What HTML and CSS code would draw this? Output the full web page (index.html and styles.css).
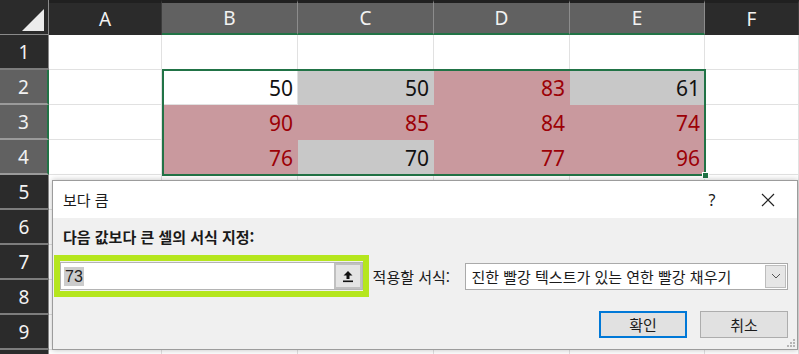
FILE: index.html
```html
<!DOCTYPE html>
<html lang="ko">
  <head>
    <meta charset="UTF-8" />
    <title>보다 큼</title>
    <link rel="stylesheet" href="styles.css">
  </head>
  <body>
    <div class="sheet">
      <div class="grid">
        <div class="corner">
          <svg width="49" height="35" viewBox="0 0 49 35"><polygon points="22,31 44,31 44,9" fill="#ececec"/></svg>
        </div>
        <div class="colhead">A</div>
        <div class="colhead sel">B</div>
        <div class="colhead sel">C</div>
        <div class="colhead sel">D</div>
        <div class="colhead sel">E</div>
        <div class="colhead">F</div>

        <div class="rowhead">1</div>
        <div class="cell"></div><div class="cell"></div><div class="cell"></div><div class="cell"></div><div class="cell"></div><div class="cell"></div>

        <div class="rowhead sel">2</div>
        <div class="cell"></div>
        <div class="cell">50</div>
        <div class="cell gray">50</div>
        <div class="cell red">83</div>
        <div class="cell gray">61</div>
        <div class="cell"></div>

        <div class="rowhead sel">3</div>
        <div class="cell"></div>
        <div class="cell red">90</div>
        <div class="cell red">85</div>
        <div class="cell red">84</div>
        <div class="cell red">74</div>
        <div class="cell"></div>

        <div class="rowhead sel">4</div>
        <div class="cell"></div>
        <div class="cell red">76</div>
        <div class="cell gray">70</div>
        <div class="cell red">77</div>
        <div class="cell red">96</div>
        <div class="cell"></div>

        <div class="rowhead">5</div>
        <div class="cell"></div><div class="cell"></div><div class="cell"></div><div class="cell"></div><div class="cell"></div><div class="cell"></div>
        <div class="rowhead">6</div>
        <div class="cell"></div><div class="cell"></div><div class="cell"></div><div class="cell"></div><div class="cell"></div><div class="cell"></div>
        <div class="rowhead">7</div>
        <div class="cell"></div><div class="cell"></div><div class="cell"></div><div class="cell"></div><div class="cell"></div><div class="cell"></div>
        <div class="rowhead">8</div>
        <div class="cell"></div><div class="cell"></div><div class="cell"></div><div class="cell"></div><div class="cell"></div><div class="cell"></div>
        <div class="rowhead">9</div>
        <div class="cell"></div><div class="cell"></div><div class="cell"></div><div class="cell"></div><div class="cell"></div><div class="cell"></div>
        <div class="rowhead"></div>
        <div class="cell"></div><div class="cell"></div><div class="cell"></div><div class="cell"></div><div class="cell"></div><div class="cell"></div>
      </div>

      <div class="selection"><span class="handle"></span></div>

      <div class="dialog">
        <div class="title">
          <span class="title-text">보다 큼</span>
          <span class="help">?</span>
          <span class="close">
            <svg width="14" height="14" viewBox="0 0 14 14"><path d="M1 1 L13 13 M13 1 L1 13" stroke="#222" stroke-width="1.2" fill="none"/></svg>
          </span>
        </div>
        <div class="body">
          <div class="label">다음 값보다 큰 셀의 서식 지정:</div>
          <div class="field-row">
            <div class="highlight">
              <div class="input">
                <span class="value">73</span>
                <span class="ref-btn">
                  <svg width="12" height="13" viewBox="0 0 12 13"><path d="M6 1 L1.5 5.5 H4.5 V9 H7.5 V5.5 H10.5 Z" fill="#111"/><rect x="1" y="10.5" width="10" height="1.6" fill="#111"/></svg>
                </span>
              </div>
            </div>
            <span class="apply-label">적용할 서식:</span>
            <div class="select">
              <span class="select-text">진한 빨강 텍스트가 있는 연한 빨강 채우기</span>
              <span class="select-btn">
                <svg width="10" height="6" viewBox="0 0 10 6"><path d="M1 1 L5 5 L9 1" stroke="#555" stroke-width="1" fill="none"/></svg>
              </span>
            </div>
          </div>
          <div class="buttons">
            <button class="btn primary">확인</button>
            <button class="btn">취소</button>
          </div>
        </div>
        <svg class="grip" width="10" height="10" viewBox="0 0 10 10">
          <rect x="7" y="1" width="2" height="2" fill="#b5b5b5"/>
          <rect x="4" y="4" width="2" height="2" fill="#b5b5b5"/>
          <rect x="7" y="4" width="2" height="2" fill="#b5b5b5"/>
          <rect x="1" y="7" width="2" height="2" fill="#b5b5b5"/>
          <rect x="4" y="7" width="2" height="2" fill="#b5b5b5"/>
          <rect x="7" y="7" width="2" height="2" fill="#b5b5b5"/>
        </svg>
      </div>
    </div>
  </body>
</html>
```

FILE: styles.css
```css
*{
  margin: 0;
  padding: 0;
  box-sizing: border-box;
}

body{
  width: 799px;
  height: 354px;
  overflow: hidden;
  background: #ffffff;
  font-family: "Noto Sans", "Noto Sans CJK KR", sans-serif;
}

.sheet{
  position: relative;
  width: 799px;
  height: 354px;
  overflow: hidden;
}

.grid{
  display: grid;
  grid-template-columns: 49px 113px 136px 136px 136px 135px 94px;
  grid-auto-rows: 35px;
}

.corner{
  background: #2b2b2b;
  border-right: 1px solid #8a8a8a;
  border-bottom: 1px solid #8a8a8a;
}

.corner svg{
  display: block;
}

.colhead{
  background: #2b2b2b;
  color: #f2f2f2;
  font-size: 19px;
  display: flex;
  align-items: center;
  justify-content: center;
  border-right: 1px solid #3c3c3c;
  border-top: 3px solid #202020;
}

.colhead.sel{
  background: #616161;
  border-right: 1px solid #8c8c8c;
  border-bottom: 2px solid #217346;
}

.rowhead{
  background: #2b2b2b;
  color: #f2f2f2;
  font-size: 19px;
  display: flex;
  align-items: center;
  justify-content: center;
  border-bottom: 2px solid #7d7d7d;
  border-right: 1px solid #8a8a8a;
}

.rowhead.sel{
  background: #616161;
  border-bottom: 2px solid #9a9a9a;
  border-right: 2px solid #217346;
}

.cell{
  border-right: 1px solid #e1e1e1;
  border-bottom: 1px solid #e1e1e1;
  font-size: 21px;
  color: #111111;
  display: flex;
  align-items: center;
  justify-content: flex-end;
  padding: 2px 4px 0 0;
}

.cell.red{
  background: #c9999e;
  border-color: #c9999e;
  color: #9c0006;
}

.cell.gray{
  background: #c8c8c8;
  border-color: #c8c8c8;
}

.selection{
  position: absolute;
  left: 162px;
  top: 69px;
  width: 544px;
  height: 107px;
  border: 2px solid #217346;
}

.handle{
  position: absolute;
  right: -5px;
  bottom: -5px;
  width: 7px;
  height: 7px;
  background: #217346;
  border: 1px solid #ffffff;
}

/* dialog */
.dialog{
  position: absolute;
  left: 52px;
  top: 180px;
  width: 746px;
  height: 170px;
  border: 1px solid #9c9c9c;
  background: #f0f0f0;
  box-shadow: 0 0 6px rgba(0, 0, 0, 0.25);
  font-family: "Noto Sans CJK KR", sans-serif;
  font-size: 15px;
  color: #1a1a1a;
}

.title{
  height: 37px;
  background: #ffffff;
  display: flex;
  align-items: center;
  padding-left: 10px;
}

.title-text{
  flex: 1;
}

.help{
  width: 20px;
  text-align: center;
  font-family: "Noto Sans", sans-serif;
  font-size: 16px;
}

.close{
  width: 56px;
  display: flex;
  justify-content: center;
  margin-left: 18px;
  margin-right: 1px;
}

.body{
  padding: 9px 9px 0 10px;
}

.label{
  font-weight: bold;
  line-height: 20px;
}

.field-row{
  display: flex;
  align-items: center;
  margin-top: 8px;
  margin-left: -9px;
}

.highlight{
  width: 315px;
  height: 42px;
  border: 6px solid #b5e61d;
  padding: 1px 0 1px 0;
}

.input{
  height: 28px;
  background: #ffffff;
  border: 1px solid #b4b4b4;
  display: flex;
  align-items: center;
  justify-content: space-between;
  padding-left: 3px;
}

.value{
  font-family: "Liberation Sans", sans-serif;
  font-size: 16px;
  background: #cccccc;
  color: #222222;
  line-height: 19px;
  padding: 0 1px;
}

.ref-btn{
  width: 28px;
  height: 26px;
  background: #e4e4e4;
  border: 2px solid #c0c0c0;
  display: flex;
  align-items: center;
  justify-content: center;
}

.apply-label{
  margin-left: 4px;
  width: 93px;
}

.select{
  width: 323px;
  height: 27px;
  background: #ffffff;
  border: 1px solid #aaaaaa;
  display: flex;
  align-items: center;
  justify-content: space-between;
  padding-left: 5px;
  padding-right: 1px;
}

.select-btn{
  width: 21px;
  height: 23px;
  background: #e6e6e6;
  border: 1px solid #bdbdbd;
  display: flex;
  align-items: center;
  justify-content: center;
}

.buttons{
  display: flex;
  justify-content: flex-end;
  gap: 13px;
  margin-top: 14px;
}

.btn{
  width: 88px;
  height: 27px;
  background: #e1e1e1;
  border: 1px solid #adadad;
  font-family: "Noto Sans CJK KR", sans-serif;
  font-size: 15px;
  color: #1a1a1a;
}

.btn.primary{
  border: 2px solid #0078d7;
}

.grip{
  position: absolute;
  right: 1px;
  bottom: 1px;
}
```
